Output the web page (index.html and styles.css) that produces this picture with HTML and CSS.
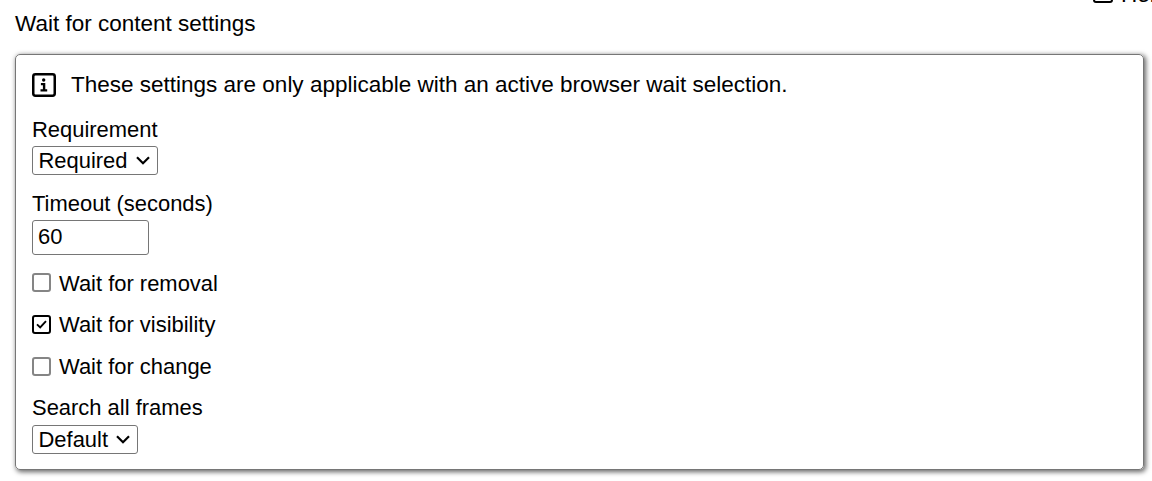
FILE: index.html
```html
<!DOCTYPE html>
<html lang="en">
<head>
    <meta charset="UTF-8">
    <meta name="viewport" content="width=device-width, initial-scale=1.0">
    <title>Wait for content settings</title>
    <link rel="stylesheet" href="styles.css">
</head>
<body>
    <div class="help">
        <span class="help-icon"></span>
        <span>Help</span>
    </div>
    <h1 class="title">Wait for content settings</h1>
    <form class="panel">
        <div class="info">
            <svg class="info-icon" viewBox="0 0 24 24">
                <rect x="1.25" y="1.25" width="21.5" height="21.5" rx="2.2" fill="none" stroke="#000" stroke-width="2.5"/>
                <circle cx="11.7" cy="7" r="1.7"/>
                <path d="M8.9 10h4.4v6.2h1.9v2.2H8.5v-2.2h2.4v-4h-2z"/>
            </svg>
            <span class="info-text">These settings are only applicable with an active browser wait selection.</span>
        </div>

        <label class="label" for="requirement">Requirement</label>
        <div class="select-box required">
            <select id="requirement">
                <option>Required</option>
                <option>Optional</option>
            </select>
            <svg class="arrow" viewBox="0 0 14 9"><path d="M1 1.3l6 6 6-6"/></svg>
        </div>

        <label class="label timeout-label" for="timeout">Timeout (seconds)</label>
        <input class="timeout" type="text" id="timeout" value="60">

        <label class="check removal"><input type="checkbox"><span>Wait for removal</span></label>
        <label class="check"><input type="checkbox" checked><svg class="tick" viewBox="0 0 11 9"><path d="M1 4.4l3.2 3L10 1.2"/></svg><span>Wait for visibility</span></label>
        <label class="check change"><input type="checkbox"><span>Wait for change</span></label>

        <label class="label frames-label" for="frames">Search all frames</label>
        <div class="select-box frames">
            <select id="frames">
                <option>Default</option>
                <option>Yes</option>
                <option>No</option>
            </select>
            <svg class="arrow" viewBox="0 0 14 9"><path d="M1 1.3l6 6 6-6"/></svg>
        </div>
    </form>
</body>
</html>
```
FILE: styles.css
```css
* {
    box-sizing: border-box;
}

body {
    margin: 0;
    height: 481px;
    overflow: hidden;
    position: relative;
    background: #fff;
    color: #000;
    font-family: "Liberation Sans", Arial, sans-serif;
    font-size: 21.95px;
    line-height: 26px;
}

/* scrolled toolbar link, mostly out of view */
.help {
    position: absolute;
    top: -18px;
    left: 1093px;
    display: flex;
    gap: 8px;
    font-size: 22.5px;
    white-space: nowrap;
}

.help-icon {
    width: 20px;
    height: 21px;
    border: 2px solid #000;
    border-radius: 3px;
}

.title {
    margin: 0;
    padding: 11px 0 0 15px;
    font-size: 22.5px;
    font-weight: normal;
}

.panel {
    width: 1129px;
    height: 416px;
    margin: 17px 0 0 15px;
    padding: 17px 16px;
    border: 1px solid #767676;
    border-radius: 5px;
    box-shadow: 1.5px 1.5px 5px rgba(0, 0, 0, 0.6);
}

.info {
    display: flex;
    align-items: center;
    height: 26px;
    margin-bottom: 19px;
    font-size: 22.5px;
}

.info-icon {
    width: 24px;
    height: 24px;
    margin-right: 15px;
}

.label {
    display: block;
    height: 26px;
    margin-bottom: 3px;
}

.select-box {
    position: relative;
    height: 29px;
}

.required {
    width: 126px;
}

.frames {
    width: 106px;
}

select {
    display: block;
    appearance: none;
    width: 100%;
    height: 29px;
    padding: 0 0 0 5.5px;
    border: 1px solid #767676;
    border-radius: 3px;
    background: #fff;
    color: #000;
    font: inherit;
}

.arrow {
    position: absolute;
    right: 8px;
    top: 10px;
    width: 14px;
    height: 9px;
    fill: none;
    stroke: #000;
    stroke-width: 2.2;
    pointer-events: none;
}

.timeout-label {
    margin-top: 16px;
}

.timeout {
    display: block;
    width: 117px;
    height: 35px;
    margin-bottom: 16px;
    padding: 0 5px 2px;
    border: 1px solid #767676;
    border-radius: 3px;
    font: inherit;
}

.check {
    position: relative;
    display: flex;
    align-items: center;
    height: 26px;
    margin-bottom: 15.4px;
}

.check input {
    appearance: none;
    width: 19px;
    height: 19px;
    margin: 0 8px 2px 0;
    border: 2px solid #858585;
    border-radius: 3px;
}

.check input:checked {
    border-color: #000;
}

.removal input {
    margin-bottom: 3px;
}

.change input {
    margin-bottom: 1px;
}

.tick {
    position: absolute;
    left: 4px;
    top: 7.6px;
    width: 11px;
    height: 9px;
    fill: none;
    stroke: #000;
    stroke-width: 1.9;
}

.frames-label {
    margin-bottom: 4px;
}
```
